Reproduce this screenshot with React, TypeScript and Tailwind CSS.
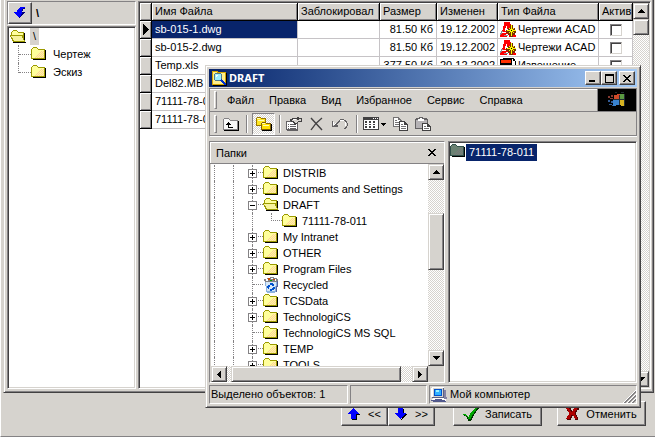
import { useState } from 'react';
import type { ReactNode } from 'react';

const RAISED =
  'border border-t-[#d6d3ce] border-l-[#d6d3ce] border-r-[#424142] border-b-[#424142] shadow-[inset_1px_1px_0_#fff,inset_-1px_-1px_0_#848284] bg-[#d6d3ce]';
const BUTTON =
  'border border-t-white border-l-white border-r-[#424142] border-b-[#424142] shadow-[inset_-1px_-1px_0_#848284] bg-[#d6d3ce]';
const SUNKEN = 'border border-t-[#848284] border-l-[#848284] border-r-white border-b-white';
const DEEP =
  'border-t-[#848284] border-l-[#848284] border-r-white border-b-white border shadow-[inset_1px_1px_0_#424142,inset_-1px_-1px_0_#d6d3ce] p-px';
const TRACK = 'bg-[repeating-conic-gradient(#fff_0_25%,#d6d3ce_0_50%)] bg-[length:2px_2px]';

function Icon({ w, h, children }: { w: number; h: number; children: ReactNode }) {
  return (
    <svg width={w} height={h} viewBox={`0 0 ${w} ${h}`} shapeRendering="crispEdges" className="shrink-0" aria-hidden="true">
      {children}
    </svg>
  );
}

function Folder({ selected = false }: { selected?: boolean }) {
  return (
    <Icon w={16} h={14}>
      <path d="M2 12h12v-9h1v10H2z" fill="#000" />
      <path d="M2 0h4v1h1v1h7v10H0V2h1V1h1z" fill={selected ? '#31514a' : '#9c9a00'} />
      <path d="M2 1h4v1h1v1h6v8H1V2h1z" fill={selected ? '#6b8273' : '#ffff9c'} />
      <path
        d="M10 4h1v1h-1zM12 4h1v1h-1zM9 5h1v1H9zM11 5h1v1h-1zM8 6h1v1H8zM10 6h1v1h-1zM12 6h1v1h-1zM7 7h1v1H7zM9 7h1v1H9zM11 7h1v1h-1zM6 8h1v1H6zM8 8h1v1H8zM10 8h1v1h-1zM12 8h1v1h-1zM5 9h1v1H5zM7 9h1v1H7zM9 9h1v1H9zM11 9h1v1h-1zM4 10h1v1H4zM6 10h1v1H6zM8 10h1v1H8zM10 10h1v1h-1zM12 10h1v1h-1z"
        fill={selected ? '#7b797b' : '#ffcf9c'}
      />
    </Icon>
  );
}

function OpenFolder() {
  return (
    <Icon w={16} h={14}>
      <path d="M14 4h1v8h1v1H3v-1h11z" fill="#000" />
      <path d="M3 0h4v1h1v1h6v10H3v-1H2V8H1V2h1V1h1z" fill="#9c9a00" />
      <path d="M3 1h4v1h1v1h5v2H2V2h1z" fill="#ffff9c" />
      <path d="M0 5h12v1h1v2h1v2h1v2H3v-1H2V9H1V7H0z" fill="#9c9a00" />
      <path d="M1 6h11v2h1v2h1v1H4v-1H3V8H2V7H1z" fill="#f7f39c" />
      <path d="M14 3h1v7h-1z" fill="#000" />
    </Icon>
  );
}

function RecycleBin() {
  return (
    <Icon w={16} h={16}>
      <path d="M2 3h12l-1 12-2 1H5l-2-1z" fill="#8cb2de" />
      <path d="M3 4h10l-1 10H4z" fill="#d6e7f7" />
      <path d="M1 2h3V1h3V0h4v1h3v1h1v2h-1v1H2V4H1z" fill="#848284" />
      <path d="M3 2h2v2H3zM8 1h2v1H8zM12 2h1v2h-1z" fill="#fff" />
      <path d="M5 1h2v2H5zM10 2h2v1h-2z" fill="#c64900" />
      <path d="M7 3h2v1H7z" fill="#009a00" />
      <path d="M7 6h3v1h1v2H9V8H7zM5 8h2v2H6v2H5v-1H4V9h1zM7 12h2v-1h1v-1h2v2h-1v1H9v1H7z" fill="#0051ce" />
      <path d="M14 4h1v6h-1v5h-1V9h1z" fill="#52619c" />
    </Icon>
  );
}

function AcadIcon() {
  return (
    <Icon w={16} h={16}>
      <path d="M4 0h6v2h1v3h1v3h1v3h1v2h2v2H9v-2H6v1h1v1H0v-2h1v-2h1V8h1V4h1z" fill="#ff0000" />
      <path d="M5 6h1V4h1v3h1v2H5z" fill="#fff" />
      <path d="M1 9h2v1h4v1H2v1H1v1H0v-2h1zM4 13h4v1H4z" fill="#8c8a8c" />
      <path d="M2 10h5v1H2zM6 12h2v1H6z" fill="#fff" />
      <path d="M10 3h3v3h2v2h1v3h-1v2h-2v2h-3v-2H8v-2H6V8h2V6h2z" fill="#7b3000" />
      <path d="M11 3h1v4h1V6h1v1h-1v1h3v1h-3v1h1v1h-1v-1h-1v4h-1v-4h-1v1H9v-1h1V9H7V8h3V7H9V6h1v1h1z" fill="#ffff00" />
      <path d="M11 8h1v1h-1z" fill="#000" />
    </Icon>
  );
}

function NoticeIcon() {
  return (
    <Icon w={16} h={16}>
      <path d="M3 0h11v1h1v2h1v13H3V7H0V1h3z" fill="#000" />
      <path d="M12 1h1v2h2v12H4V7h8z" fill="#fff" />
      <path d="M1 2h10v3H1z" fill="#ff3000" />
      <path d="M6 9h7v1H6zM6 11h7v1H6z" fill="#848284" />
    </Icon>
  );
}

function SearchFolder() {
  return (
    <Icon w={16} h={16}>
      <path d="M1 1h6v1h8v13H1z" fill="#d6a600" />
      <path d="M2 2h4v1h8v11H2z" fill="#ffef8c" />
      <path d="M15 3h1v13H2v-1h13z" fill="#000" />
      <circle cx="7" cy="7" r="4" fill="#9cefff" stroke="#527b8c" />
      <path d="M5 5h2v1H6v1H5z" fill="#fff" />
      <path d="M10 9h1v1h1v1h1v1h1v1h1v2h-2v-1h-1v-1h-1v-1h-1v-1H9v-1h1z" fill="#0030ce" />
    </Icon>
  );
}

function Computer() {
  return (
    <Icon w={16} h={16}>
      <path d="M1 1h12v10H1z" fill="#5a6184" />
      <path d="M1 0h12v1H1zM0 1h2v9H0z" fill="#fff" />
      <path d="M2 1h10v9H2z" fill="#d6d3ce" />
      <path d="M3 2h8v7H3z" fill="#0051ce" />
      <path d="M4 3h6v5H4z" fill="#31b2ff" />
      <path d="M5 3h3v2H5z" fill="#9cefff" />
      <path d="M13 3h2v7h1v2h-3z" fill="#8482a5" />
      <path d="M2 11h11v1h2v2H1v-2h1z" fill="#fff" />
      <path d="M0 13h14v1h1v1H2v-1H0zM4 12h7v1H4z" fill="#52598c" />
    </Icon>
  );
}

type Direction = 'up' | 'down' | 'left' | 'right';

function ScrollButton({ dir, label }: { dir: Direction; label: string }) {
  const paths = {
    up: 'M3 0h1v1h1v1h1v1h1v1H0V3h1V2h1V1h1z',
    down: 'M0 0h7v1H6v1H5v1H4v1H3V3H2V2H1V1H0z',
    left: 'M3 0h1v7H3V6H2V5H1V4H0V3h1V2h1V1h1z',
    right: 'M0 0h1v1h1v1h1v1h1v1H3v1H2v1H1v1H0z',
  };
  const vertical = dir === 'up' || dir === 'down';
  return (
    <button aria-label={label} className={`flex h-4 w-4 shrink-0 items-center justify-center ${RAISED}`}>
      <Icon w={vertical ? 7 : 4} h={vertical ? 4 : 7}>
        <path d={paths[dir]} />
      </Icon>
    </button>
  );
}

const files = [
  { name: 'sb-015-1.dwg', size: '81.50 Кб', date: '19.12.2002', type: 'Чертежи ACAD' },
  { name: 'sb-015-2.dwg', size: '81.50 Кб', date: '19.12.2002', type: 'Чертежи ACAD' },
  { name: 'Temp.xls', size: '377.50 Кб', date: '20.12.2002', type: 'Извещение' },
  { name: 'Del82.MB', size: '', date: '', type: '' },
  { name: '71111-78-011', size: '', date: '', type: '' },
  { name: '71111-78-011', size: '', date: '', type: '' },
];

const columns = ['Имя Файла', 'Заблокировал', 'Размер', 'Изменен', 'Тип Файла', 'Актив'];

const TH =
  'h-[18px] overflow-hidden border-r border-b border-black bg-[#d6d3ce] p-0 pl-[3px] text-left font-normal whitespace-nowrap shadow-[inset_1px_1px_0_#fff,inset_-1px_-1px_0_#848284]';
const TD = 'h-[18px] overflow-hidden border-r border-b border-[#c6c3c6] p-0 whitespace-nowrap';

function FileTable() {
  return (
    <table className="w-full table-fixed border-separate border-spacing-0 leading-[17px]">
      <colgroup>
        <col className="w-3" />
        <col className="w-[146px]" />
        <col className="w-[82px]" />
        <col className="w-[57px]" />
        <col className="w-[61px]" />
        <col className="w-[101px]" />
        <col />
      </colgroup>
      <thead>
        <tr>
          <th className={TH} aria-label="Строка" />
          {columns.map(c => (
            <th key={c} className={TH}>{c}</th>
          ))}
        </tr>
      </thead>
      <tbody>
        {files.map((f, i) => (
          <tr key={i}>
            <td className={TH}>
              {i === 0 && (
                <Icon w={6} h={11}>
                  <path d="M0 0h1v1h1v1h1v1h1v1h1v1h1v1H5v1H4v1H3v1H2v1H1v1H0z" />
                </Icon>
              )}
            </td>
            <td className={`${TD} pl-[3px] ${i === 0 ? 'bg-[#08246b] text-white' : ''}`}>{f.name}</td>
            <td className={TD} />
            <td className={`${TD} pr-[3px] text-right`}>{f.size}</td>
            <td className={`${TD} pl-[3px]`}>{f.date}</td>
            <td className={TD}>
              {f.type && (
                <div className="flex h-[17px] items-center gap-[2px] pl-[2px]">
                  {i < 2 ? <AcadIcon /> : <NoticeIcon />}
                  {f.type}
                </div>
              )}
            </td>
            <td className={TD}>
              <div className="flex h-[17px] items-center justify-center">
                <input
                  type="checkbox"
                  aria-label={`Актив ${f.name}`}
                  className="h-3 w-3 appearance-none border border-t-[#848284] border-l-[#848284] border-r-[#d6d3ce] border-b-[#d6d3ce] shadow-[inset_1px_1px_0_#424142]"
                />
              </div>
            </td>
          </tr>
        ))}
      </tbody>
    </table>
  );
}

function ProjectTree() {
  return (
    <div className={`flex-1 bg-white ${DEEP}`}>
      <div className="flex h-[17px] items-center gap-1 pl-px">
        <OpenFolder />
        <span className="bg-[#d6d3ce] px-[3px] leading-[17px]">\</span>
      </div>
      {['Чертеж', 'Эскиз'].map((name, i) => (
        <div key={name} className="flex h-[18px] items-center pl-[9px]">
          <span className={`w-px self-start border-l border-dotted border-[#848284] ${i === 0 ? 'h-[18px]' : 'h-[10px]'}`} />
          <span className="w-3 border-t border-dotted border-[#848284]" />
          <Folder />
          <span className="pl-[6px]">{name}</span>
        </div>
      ))}
    </div>
  );
}

type Node = { name: string; kind?: 'open' | 'bin' | 'child'; toggle?: '+' | '-' };

const nodes: Node[] = [
  { name: 'DISTRIB', toggle: '+' },
  { name: 'Documents and Settings', toggle: '+' },
  { name: 'DRAFT', kind: 'open', toggle: '-' },
  { name: '71111-78-011', kind: 'child' },
  { name: 'My Intranet', toggle: '+' },
  { name: 'OTHER', toggle: '+' },
  { name: 'Program Files', toggle: '+' },
  { name: 'Recycled', kind: 'bin' },
  { name: 'TCSData', toggle: '+' },
  { name: 'TechnologiCS', toggle: '+' },
  { name: 'TechnologiCS MS SQL' },
  { name: 'TEMP', toggle: '+' },
  { name: 'TOOLS', toggle: '+' },
];

function Toggle({ sign }: { sign: '+' | '-' }) {
  return (
    <button aria-label={sign === '+' ? 'Развернуть' : 'Свернуть'} className="absolute top-1 -left-[5px]">
      <Icon w={9} h={9}>
        <path d="M0 0h9v9H0z" fill="#848284" />
        <path d="M1 1h7v7H1z" fill="#fff" />
        <path d={sign === '+' ? 'M2 4h2V2h1v2h2v1H5v2H4V5H2z' : 'M2 4h5v1H2z'} />
      </Icon>
    </button>
  );
}

function TreeRow({ node }: { node: Node }) {
  const line = 'h-4 shrink-0 border-l border-dotted border-[#848284]';
  return (
    <div className="flex h-4 items-center pl-[3px] whitespace-nowrap">
      <span className={`${line} w-[19px]`} />
      <span className={`${line} w-[19px]`} />
      {node.kind === 'child' ? (
        <>
          <span className={`${line} w-[19px]`} />
          <span className="h-2 w-[11px] self-start border-b border-l border-dotted border-[#848284]" />
        </>
      ) : (
        <span className={`${line} relative w-[11px]`}>
          <span className="block h-2 border-b border-dotted border-[#848284]" />
          {node.toggle && <Toggle sign={node.toggle} />}
        </span>
      )}
      {node.kind === 'open' ? <OpenFolder /> : node.kind === 'bin' ? <RecycleBin /> : <Folder />}
      <span className="pl-1 leading-4">{node.name}</span>
    </div>
  );
}

function FoldersPane() {
  return (
    <section className={`flex w-[236px] shrink-0 flex-col ${SUNKEN}`}>
      <header className="flex h-[22px] shrink-0 items-center justify-between border-b border-[#848284] px-[6px] shadow-[inset_1px_1px_0_#fff]">
        <span>Папки</span>
        <button aria-label="Закрыть" className="pr-[2px]">
          <Icon w={8} h={7}>
            <path d="M0 0h2v1h1v1h2V1h1V0h2v1H7v1H6v1H5v1h1v1h1v1h1v1H6V6H5V5H3v1H2v1H0V6h1V5h1V4h1V3H2V2H1V1H0z" />
          </Icon>
        </button>
      </header>
      <div className="flex min-h-0 flex-1 border-l border-[#d6d3ce] bg-white">
        <div className="min-w-0 flex-1 overflow-hidden pt-px">
          {nodes.map(n => (
            <TreeRow key={n.name} node={n} />
          ))}
        </div>
        <div className={`flex w-4 flex-col ${TRACK}`}>
          <ScrollButton dir="up" label="Вверх" />
          <div className="h-[33px] shrink-0" />
          <div className={`h-[57px] shrink-0 ${RAISED}`} />
          <div className="flex-1" />
          <ScrollButton dir="down" label="Вниз" />
        </div>
      </div>
      <div className="flex h-4 shrink-0 pl-px">
        <div className={`flex flex-1 ${TRACK}`}>
          <ScrollButton dir="left" label="Влево" />
          <div className={`mr-[11px] ml-1 flex-1 ${RAISED}`} />
          <ScrollButton dir="right" label="Вправо" />
        </div>
        <div className="w-4 bg-[#d6d3ce]" />
      </div>
    </section>
  );
}

function Grip() {
  return <span className="h-[18px] w-[3px] shrink-0 border border-t-white border-l-white border-r-[#848284] border-b-[#848284]" />;
}

function Separator() {
  return <span className="h-[18px] w-[2px] shrink-0 border-r border-l border-l-[#848284] border-r-white" />;
}

function Toolbar() {
  return (
    <div className="flex h-6 items-center border-r border-b border-[#848284] pl-1 shadow-[0_1px_0_#fff]">
      <Grip />
      <button aria-label="Вверх" className="ml-[6px]">
        <Icon w={16} h={14}>
          <path d="M1 1h5v1h1v1h8v10H0V2h1z" fill="#848284" />
          <path d="M1 2h5v1h1v1h7v8H1z" fill="#f7f7f7" />
          <path d="M15 4h1v10H1v-1h14z" fill="#000" />
          <path d="M5 5h1v1h1v1h1v1H6v2h4v1H5V8H3V7h1V6h1z" />
        </Icon>
      </button>
      <span className="ml-[7px] flex"><Separator /></span>
      <button aria-label="Папки" aria-pressed="true" className={`ml-1 flex h-[22px] w-[23px] items-center justify-center ${SUNKEN} ${TRACK}`}>
        <Icon w={16} h={16}>
          <path d="M1 1h4v1h5v8H0V2h1z" fill="#9c7900" />
          <path d="M1 2h4v1h4v6H1z" fill="#ffe721" />
          <path d="M15 8h1v7H6v-1h9z" fill="#000" />
          <path d="M6 6h4v1h5v7H5V7h1z" fill="#846100" />
          <path d="M6 7h4v1h4v5H6z" fill="#ffdf00" />
          <path d="M6 7h3v1H6zM7 9h6v1H7zM1 2h3v1H1zM2 4h6v1H2z" fill="#ffffb5" />
        </Icon>
      </button>
      <span className="ml-1 flex"><Separator /></span>
      <button aria-label="Свойства" className="ml-[5px]">
        <Icon w={16} h={14}>
          <path d="M0 4h12v10H1v-1H0z" fill="#636163" />
          <path d="M1 5h10v7H1z" fill="#fff" />
          <path d="M2 7h1v1H2zM4 7h4v1H4zM2 9h1v1H2zM4 9h6v1H4zM2 11h1v1H2zM4 11h6v1H4z" fill="#636163" />
          <path d="M4 2h2V1h5V0h2v1h3v4h-4v1h-1v1h-1v1H8V6H7V5H5V4H4z" fill="#424142" />
          <path d="M6 3h1V2h4v1h2V2h2v2h-3v1h-1v1H9V5H8V4H6z" fill="#d6d3ce" />
          <path d="M7 2h3v1H7z" fill="#fff" />
        </Icon>
      </button>
      <button aria-label="Удалить" className="ml-2">
        <svg width="13" height="14" viewBox="0 0 13 14" aria-hidden="true">
          <path d="M1 1l11 12M12 1C8 4 4 8 1 13" fill="none" stroke="#424142" strokeWidth="1.4" />
        </svg>
      </button>
      <button aria-label="Отменить действие" className="ml-[9px]">
        <Icon w={16} h={12}>
          <path d="M0 3h1v5h5v1H0zM2 7h1V6h1V5h1V4h1V3h1V2h1V1h4v1h2v1h1v2h1v3h-1v2h-1v1h-2v-1h1V9h1V8h1V5h-1V4h-1V3H8v1H7v1H6v1H5v1h1v1H2z" fill="#636163" />
          <path d="M8 2h4v1H8zM13 4h1v4h-1zM1 4h1v3H1zM2 6h1v1H2zM3 5h1v1H3z" fill="#fff" />
        </Icon>
      </button>
      <span className="ml-2 flex"><Separator /></span>
      <button aria-label="Вид" className="ml-[5px]">
        <Icon w={24} h={13}>
          <path d="M0 0h16v13H0z" fill="#424142" />
          <path d="M1 3h14v9H1z" fill="#fff" />
          <path d="M2 4h2v2H2zM6 4h2v2H6zM10 4h2v2h-2zM2 7h2v1H2zM6 7h2v1H6zM10 7h2v1h-2zM2 9h2v2H2zM6 9h2v2H6zM10 9h2v2h-2z" fill="#424142" />
          <path d="M10 1h1v1h-1zM12 1h1v1h-1zM14 1h1v1h-1z" fill="#fff" />
          <path d="M18 6h5v1h-1v1h-1v1h-1V8h-1V7h-1z" />
        </Icon>
      </button>
      <button aria-label="Копировать" className="ml-[6px]">
        <Icon w={16} h={14}>
          <path d="M0 0h6v1h1v1h1v1h1v7H0z" fill="#737173" />
          <path d="M1 1h4v2h2v1h1v5H1z" fill="#fff" />
          <path d="M2 3h2v1H2zM2 5h4v1H2zM2 7h4v1H2z" fill="#737173" />
          <path d="M6 4h6v1h1v1h1v1h1v7H6z" fill="#424142" />
          <path d="M7 5h4v3h3v5H7z" fill="#fff" />
          <path d="M8 7h2v1H8zM8 9h5v1H8zM8 11h5v1H8z" fill="#737173" />
        </Icon>
      </button>
      <button aria-label="Вставить" className="ml-[6px]">
        <Icon w={16} h={14}>
          <path d="M1 1h3V0h4v1h4v1h1v10H0V2h1z" fill="#636163" />
          <path d="M1 3h11v8H1z" fill="#b5b2b5" />
          <path d="M3 2h6v2H3zM5 1h2v1H5z" fill="#fff" />
          <path d="M7 6h6v1h1v1h1v1h1v5H7z" fill="#424142" />
          <path d="M8 7h4v3h3v3H8z" fill="#fff" />
          <path d="M9 9h2v1H9zM9 11h5v1H9z" fill="#737173" />
        </Icon>
      </button>
    </div>
  );
}

function MenuBar() {
  return (
    <div className="flex h-6 border-t border-r border-b border-[#848284] shadow-[inset_0_1px_0_#fff]">
      <div className="flex flex-1 items-center border-r border-[#848284] pl-1">
        <Grip />
        <nav className="flex gap-[15px] pl-[10px]">
          {['Файл', 'Правка', 'Вид', 'Избранное', 'Сервис', 'Справка'].map(m => (
            <button key={m}>{m}</button>
          ))}
        </nav>
      </div>
      <div className="flex w-[38px] items-center justify-center bg-black">
        <Icon w={18} h={16}>
          <path d="M6 3h3V2h3v6H6z" fill="#ce4929" />
          <path d="M12 2h4v1h1v5h-5z" fill="#5a9a42" />
          <path d="M5 8h6v5H8v1H5z" fill="#3982ce" />
          <path d="M12 8h4v6h-3v-1h-1z" fill="#d6b221" />
          <path d="M0 4h2v2H0zM3 3h2v2H3zM2 6h3v1H2z" fill="#843931" />
          <path d="M0 8h2v2H0zM3 9h2v2H3zM1 12h3v1H1zM4 13h1v1H4z" fill="#315a94" />
          <path d="M7 0h2v1H7zM13 0h3v1h-3zM16 2h1v12h-1zM11 3h1v10h-1zM5 7h11v1H5z" fill="#212c31" />
        </Icon>
      </div>
    </div>
  );
}

function ExplorerWindow({ onClose }: { onClose: () => void }) {
  const control = `flex h-[14px] w-4 items-center justify-center ${BUTTON}`;
  return (
    <div className={`absolute top-[65px] left-[205px] flex h-[343px] w-[436px] flex-col p-[3px] ${RAISED}`}>
      <div className="flex h-[18px] shrink-0 items-center bg-linear-to-r from-[#08246b] to-[#a5cbf7] pr-[2px] pl-[2px] text-white">
        <SearchFolder />
        <h1 className="flex-1 pl-[2px] font-['Noto_Sans','Liberation_Sans',sans-serif] font-bold">DRAFT</h1>
        <button aria-label="Свернуть" className={control}>
          <Icon w={8} h={7}><path d="M0 5h6v2H0z" /></Icon>
        </button>
        <button aria-label="Развернуть" className={`mr-[2px] ${control}`}>
          <Icon w={9} h={9}><path fillRule="evenodd" d="M0 0h9v9H0zM1 2v6h7V2z" /></Icon>
        </button>
        <button aria-label="Закрыть" onClick={onClose} className={control}>
          <Icon w={8} h={7}>
            <path d="M0 0h2v1h1v1h2V1h1V0h2v1H7v1H6v1H5v1h1v1h1v1h1v1H6V6H5V5H3v1H2v1H0V6h1V5h1V4h1V3H2V2H1V1H0z" />
          </Icon>
        </button>
      </div>
      <div className="mt-px shrink-0 border-l border-[#848284]">
        <MenuBar />
        <Toolbar />
      </div>
      <div className="mt-[5px] flex min-h-0 flex-1 gap-[3px]">
        <FoldersPane />
        <div className={`flex-1 bg-white ${DEEP}`}>
          <div className="flex items-start pt-px">
            <Folder selected />
            <span className="bg-[#08246b] px-[3px] leading-[17px] text-white">71111-78-011</span>
          </div>
        </div>
      </div>
      <footer className="mt-[2px] flex h-[19px] shrink-0 gap-[2px] leading-[17px]">
        <span className={`w-[139px] pl-px ${SUNKEN}`}>Выделено объектов: 1</span>
        <span className={`w-[77px] ${SUNKEN}`} />
        <span className={`flex flex-1 items-center gap-[3px] pl-px ${SUNKEN}`}>
          <Computer />
          <span className="flex-1">Мой компьютер</span>
          <svg width="13" height="13" viewBox="0 0 13 13" className="self-end" aria-hidden="true">
            <path d="M0 13 13 0M4 13l9-9M8 13l5-5" stroke="#fff" />
            <path d="M1 13 13 1M2 13 13 2M5 13l8-8M6 13l7-7M9 13l4-4M10 13l3-3" stroke="#848284" />
          </svg>
        </span>
      </footer>
    </div>
  );
}

function ActionButtons() {
  const base = `flex h-[25px] items-center justify-center ${BUTTON}`;
  return (
    <div className="flex h-[43px] shrink-0 items-start justify-end pt-2 pr-2">
      <button className={`${base} w-[47px] gap-2`}>
        <Icon w={12} h={12}>
          <path d="M6 1h1v1h1v1h1v1h1v1h1v1h1v1H9v5H4v-1h4V6h3z" fill="#000" />
          <path d="M5 0h1v1h1v1h1v1h1v1h1v1h1v1H8v5H3V6H0V5h1V4h1V3h1V2h1V1h1z" fill="#0000ff" />
        </Icon>
        &lt;&lt;
      </button>
      <button className={`${base} mr-[18px] w-[47px] gap-2`}>
        <Icon w={12} h={12}>
          <path d="M8 1h1v5h3v1h-1v1h-1v1H9v1H8v1H7v1H6v-1h1V1z" fill="#000" />
          <path d="M3 0h5v5h3v1h-1v1H9v1H8v1H7v1H6v1H5v-1H4V9H3V8H2V7H1V6H0V5h3z" fill="#0000ff" />
        </Icon>
        &gt;&gt;
      </button>
      <button className={`${base} mr-[15px] w-[89px] gap-[6px]`}>
        <Icon w={16} h={14}>
          <path d="M1 8h3v1h1v1h1V9h1V7h1V6h1V5h1V4h1V3h1V2h2V1h2v1h-1v1h-1v1h-1v2h-1v1h-1v2h-1v2H9v2H8v1H5v-2H4v-2H3V9H1z" fill="#003000" />
          <path d="M0 7h3v1h1v1h1v1h1V8h1V6h1V5h1V4h1V3h1V2h1V1h2V0h1v1h-1v1h-1v2h-1v1h-1v2h-1v1H9v2H8v2H5v-2H4V9H2V8H0z" fill="#00a600" />
        </Icon>
        Записать
      </button>
      <button className={`${base} w-[89px] gap-[7px]`}>
        <Icon w={13} h={14}>
          <path d="M1 1h4v2h1v2h1V3h1V2h1V1h4v2h-2v2h-1v3h1v2h1v3H9v-2H8V9H6v2H5v2H1v-2h2V9h1V6H3V4H1z" fill="#520000" />
          <path d="M0 1h3v1h1v2h1v1h1V4h1V2h1V1h1V0h3v1h-1v2h-1v1H9v4h1v2h1v2H9v-1H8V9H7V8H5v2H4v2H0v-1h1V9h1V8h1V5H2V3H1V2H0z" fill="#ad0000" />
        </Icon>
        Отменить
      </button>
    </div>
  );
}

export default function App() {
  const [open, setOpen] = useState(true);

  return (
    <div className="relative flex h-screen flex-col overflow-hidden bg-white font-['Liberation_Sans',sans-serif] text-[11px] leading-[14px] text-black">
      <div className="mb-[2px] flex min-h-0 flex-1 flex-col border-b border-l border-b-[#848284] border-l-white bg-[#d6d3ce] pr-px pl-[2px]">
        <main className="flex min-h-0 flex-1 gap-[2px] border-r border-b border-l border-r-[#424142] border-b-[#424142] border-l-[#d6d3ce] pt-px pr-[2px] pb-[3px] pl-[3px] shadow-[inset_1px_0_0_#fff,inset_-1px_-1px_0_#848284]">
          <aside className="flex w-[129px] shrink-0 flex-col gap-px">
            <div className={`flex h-6 items-center ${SUNKEN}`}>
              <button aria-label="Назад" className={`flex h-[22px] w-6 items-center justify-center ${BUTTON}`}>
                <Icon w={12} h={12}>
                  <path d="M6 0h5v1H9v1H8v3h3v1h-1v1H9v1H8v1H7v1H6v1H5v-1H4V9H3V8H2V7H1V6H0V5h3V3h1V2h1V1h1z" fill="#0000ff" />
                  <path d="M8 5h3v1h-1v1H9v1H8v1H7v1H6v1H5v-1h1V9h1V7h1zM9 1h2v1H9zM8 2h1v2H8z" fill="#00007b" />
                </Icon>
              </button>
              <span className="pl-1 font-bold">\</span>
            </div>
            <ProjectTree />
          </aside>
          <div className={`flex min-w-0 flex-1 bg-white ${DEEP}`}>
            <div className="min-w-0 flex-1">
              <FileTable />
            </div>
            <div className={`flex w-4 shrink-0 flex-col ${TRACK}`}>
              <ScrollButton dir="up" label="Прокрутить вверх" />
              <div className={`h-4 ${RAISED}`} />
              <div className="flex-1" />
              <ScrollButton dir="down" label="Прокрутить вниз" />
            </div>
          </div>
        </main>
        <ActionButtons />
      </div>
      {open && <ExplorerWindow onClose={() => setOpen(false)} />}
    </div>
  );
}
